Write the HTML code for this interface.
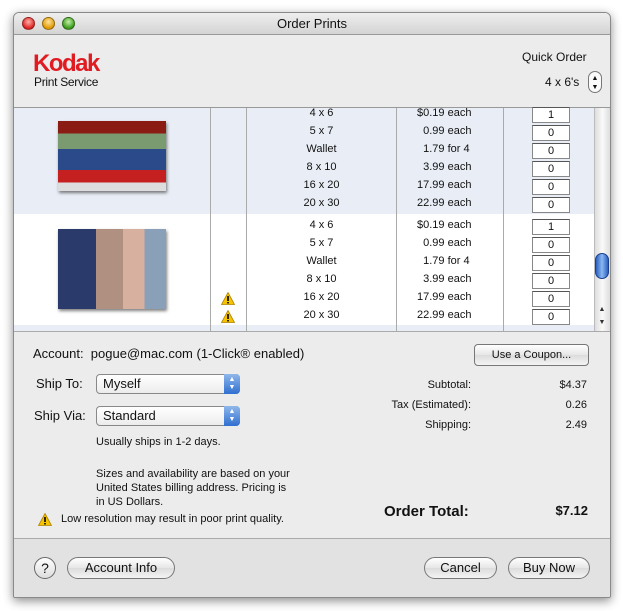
<!DOCTYPE html>
<html><head><meta charset="utf-8"><style>
*{margin:0;padding:0;box-sizing:border-box}
body{width:623px;height:611px;background:#fff;position:relative;overflow:hidden;font-family:"Liberation Sans",sans-serif;color:#111}
.a{position:absolute}
#win{left:13px;top:12px;width:598px;height:586px;border-radius:6px 6px 2px 2px;background:#ececec;box-shadow:0 3px 10px rgba(0,0,0,.45);overflow:hidden;border:1px solid #8a8a8a}
#title{left:0;top:0;width:100%;height:22px;background:linear-gradient(#eee,#d4d4d4);border-bottom:1px solid #999;text-align:center;font-size:13px;line-height:22px}
.tl{width:13px;height:13px;border-radius:50%;top:4px;border:1px solid rgba(0,0,0,.35)}
.t{font-size:11px;line-height:18px}
.q{width:38px;height:16px;background:#fff;border:1px solid #888;border-top-color:#555;font-size:11px;text-align:center;line-height:14px}
.btn{border:1px solid #777;border-radius:11px;background:linear-gradient(#fff,#e6e6e6 50%,#dcdcdc 51%,#f4f4f4);font-size:13px;text-align:center;line-height:20px;height:22px}
.sel{border:1px solid #888;border-radius:4px;background:linear-gradient(#fff,#ececec);height:20px;font-size:13px;line-height:18px;padding-left:6px}
.sel i{position:absolute;right:-1px;top:-1px;width:16px;height:20px;border-radius:0 4px 4px 0;background:linear-gradient(#8fb7ea,#2f6fd1);color:#fff;font-size:7px;line-height:8px;text-align:center;font-style:normal;padding-top:2px}
.r{text-align:right}
.w{position:absolute;width:14px;height:13px}
</style></head><body>
<svg width="0" height="0" style="position:absolute"><defs><symbol id="warn" viewBox="0 0 14 13"><path d="M7 0.5L13.5 12.5H0.5Z" fill="#f5c400" stroke="#b08000" stroke-width="0.8"/><rect x="6.2" y="4" width="1.6" height="5" fill="#000"/><rect x="6.2" y="10" width="1.6" height="1.5" fill="#000"/></symbol></defs></svg>
<div id="win" class="a">
<div id="title" class="a">Order Prints</div>
<div class="a tl" style="left:8px;background:radial-gradient(circle at 50% 35%,#ffb0a8,#d22 70%)"></div>
<div class="a tl" style="left:28px;background:radial-gradient(circle at 50% 35%,#ffe3a0,#e09a00 70%)"></div>
<div class="a tl" style="left:48px;background:radial-gradient(circle at 50% 35%,#c4f0a8,#3a9a1a 70%)"></div>
<div class="a" style="left:19px;top:37px;font-size:24px;font-weight:bold;color:#e01b22;letter-spacing:-1.5px">Kodak</div>
<div class="a" style="left:20px;top:62px;font-size:12px;letter-spacing:-.3px">Print Service</div>
<div class="a" style="left:508px;top:37px;font-size:12px">Quick Order</div>
<div class="a" style="left:531px;top:62px;font-size:12px">4 x 6's</div>
<div class="a" style="left:574px;top:58px;width:14px;height:22px;border:1px solid #777;border-radius:7px;background:#fafafa;font-size:7px;text-align:center;line-height:9px;padding-top:2px">▲<br>▼</div>
<div class="a" style="left:0;top:94px;width:598px;height:225px;background:#fff;border-top:1px solid #999;border-bottom:1px solid #aaa"></div>
<div class="a" style="left:0;top:95px;width:580px;height:106px;background:#e9eef6"></div>
<div class="a" style="left:0;top:312px;width:580px;height:6px;background:#e9eef6"></div>
<div class="a" style="left:196px;top:95px;width:1px;height:223px;background:#aaa"></div>
<div class="a" style="left:232px;top:95px;width:1px;height:223px;background:#aaa"></div>
<div class="a" style="left:382px;top:95px;width:1px;height:223px;background:#aaa"></div>
<div class="a" style="left:489px;top:95px;width:1px;height:223px;background:#aaa"></div>
<div class="a" style="left:44px;top:108px;width:108px;height:70px;background:linear-gradient(#8a1c14 0 18%,#7a9a70 18% 40%,#2a4a8a 40% 70%,#c42020 70% 88%,#ddd 88%);box-shadow:1px 2px 3px rgba(0,0,0,.5)"></div>
<div class="a" style="left:44px;top:216px;width:108px;height:80px;background:linear-gradient(90deg,#2a3a6a 0 35%,#b09080 35% 60%,#d8b0a0 60% 80%,#8aa0b8 80%);box-shadow:1px 2px 3px rgba(0,0,0,.5)"></div>
<svg class="w" style="left:207px;top:279px"><use href="#warn"/></svg>
<svg class="w" style="left:207px;top:297px"><use href="#warn"/></svg>
<div class="a t" style="left:233px;top:91px;width:149px;text-align:center">4 x 6<br>5 x 7<br>Wallet<br>8 x 10<br>16 x 20<br>20 x 30</div>
<div class="a t" style="left:233px;top:203px;width:149px;text-align:center">4 x 6<br>5 x 7<br>Wallet<br>8 x 10<br>16 x 20<br>20 x 30</div>
<div class="a t" style="left:383px;top:91px;width:100px;padding-left:20px">$0.19 each<br>&nbsp;&nbsp;0.99 each<br>&nbsp;&nbsp;1.79 for 4<br>&nbsp;&nbsp;3.99 each<br>17.99 each<br>22.99 each</div>
<div class="a t" style="left:383px;top:203px;width:100px;padding-left:20px">$0.19 each<br>&nbsp;&nbsp;0.99 each<br>&nbsp;&nbsp;1.79 for 4<br>&nbsp;&nbsp;3.99 each<br>17.99 each<br>22.99 each</div>
<div class="a q" style="left:518px;top:94px">1</div><div class="a q" style="left:518px;top:112px">0</div><div class="a q" style="left:518px;top:130px">0</div><div class="a q" style="left:518px;top:148px">0</div><div class="a q" style="left:518px;top:166px">0</div><div class="a q" style="left:518px;top:184px">0</div>
<div class="a q" style="left:518px;top:206px">1</div><div class="a q" style="left:518px;top:224px">0</div><div class="a q" style="left:518px;top:242px">0</div><div class="a q" style="left:518px;top:260px">0</div><div class="a q" style="left:518px;top:278px">0</div><div class="a q" style="left:518px;top:296px">0</div>
<div class="a" style="left:580px;top:95px;width:16px;height:223px;background:linear-gradient(90deg,#ddd,#fafafa,#ddd);border-left:1px solid #bbb"></div>
<div class="a" style="left:581px;top:240px;width:14px;height:26px;border-radius:7px;background:linear-gradient(90deg,#2a5fc0,#8ab8f0,#2a5fc0);border:1px solid #1a3f90"></div>
<div class="a" style="left:581px;top:290px;width:14px;height:28px;font-size:7px;text-align:center;line-height:13px;color:#333">▲<br>▼</div>
<div class="a" style="left:19px;top:333px;font-size:13px">Account:&nbsp; pogue@mac.com (1-Click® enabled)</div>
<div class="a btn" style="left:460px;top:331px;width:115px;border-radius:4px;font-size:11px">Use a Coupon...</div>
<div class="a" style="left:22px;top:363px;font-size:13px">Ship To:</div>
<div class="a sel" style="left:82px;top:361px;width:144px">Myself<i>▲<br>▼</i></div>
<div class="a" style="left:20px;top:395px;font-size:13px">Ship Via:</div>
<div class="a sel" style="left:82px;top:393px;width:144px">Standard<i>▲<br>▼</i></div>
<div class="a" style="left:82px;top:423px;font-size:11px">Usually ships in 1-2 days.</div>
<div class="a" style="left:82px;top:454px;font-size:11px;line-height:14px">Sizes and availability are based on your<br>United States billing address. Pricing is<br>in US Dollars.</div>
<svg class="w" style="left:24px;top:500px"><use href="#warn"/></svg>
<div class="a" style="left:47px;top:500px;font-size:11px">Low resolution may result in poor print quality.</div>
<div class="a r" style="left:340px;top:362px;width:117px;font-size:11px;line-height:20px">Subtotal:<br>Tax (Estimated):<br>Shipping:</div>
<div class="a r" style="left:500px;top:362px;width:73px;font-size:11px;line-height:20px">$4.37<br>0.26<br>2.49</div>
<div class="a" style="left:370px;top:490px;font-size:15px;font-weight:bold">Order Total:</div>
<div class="a r" style="left:500px;top:490px;width:74px;font-size:13px;font-weight:bold">$7.12</div>
<div class="a" style="left:0;top:525px;width:598px;height:61px;background:#e2e2e2;border-top:1px solid #aaa"></div>
<div class="a" style="left:20px;top:544px;width:22px;height:22px;border-radius:50%;border:1px solid #666;background:linear-gradient(#fff,#ddd);text-align:center;font-size:14px;line-height:20px">?</div>
<div class="a btn" style="left:53px;top:544px;width:108px">Account Info</div>
<div class="a btn" style="left:410px;top:544px;width:73px">Cancel</div>
<div class="a btn" style="left:494px;top:544px;width:82px">Buy Now</div>
</div>
</body></html>
